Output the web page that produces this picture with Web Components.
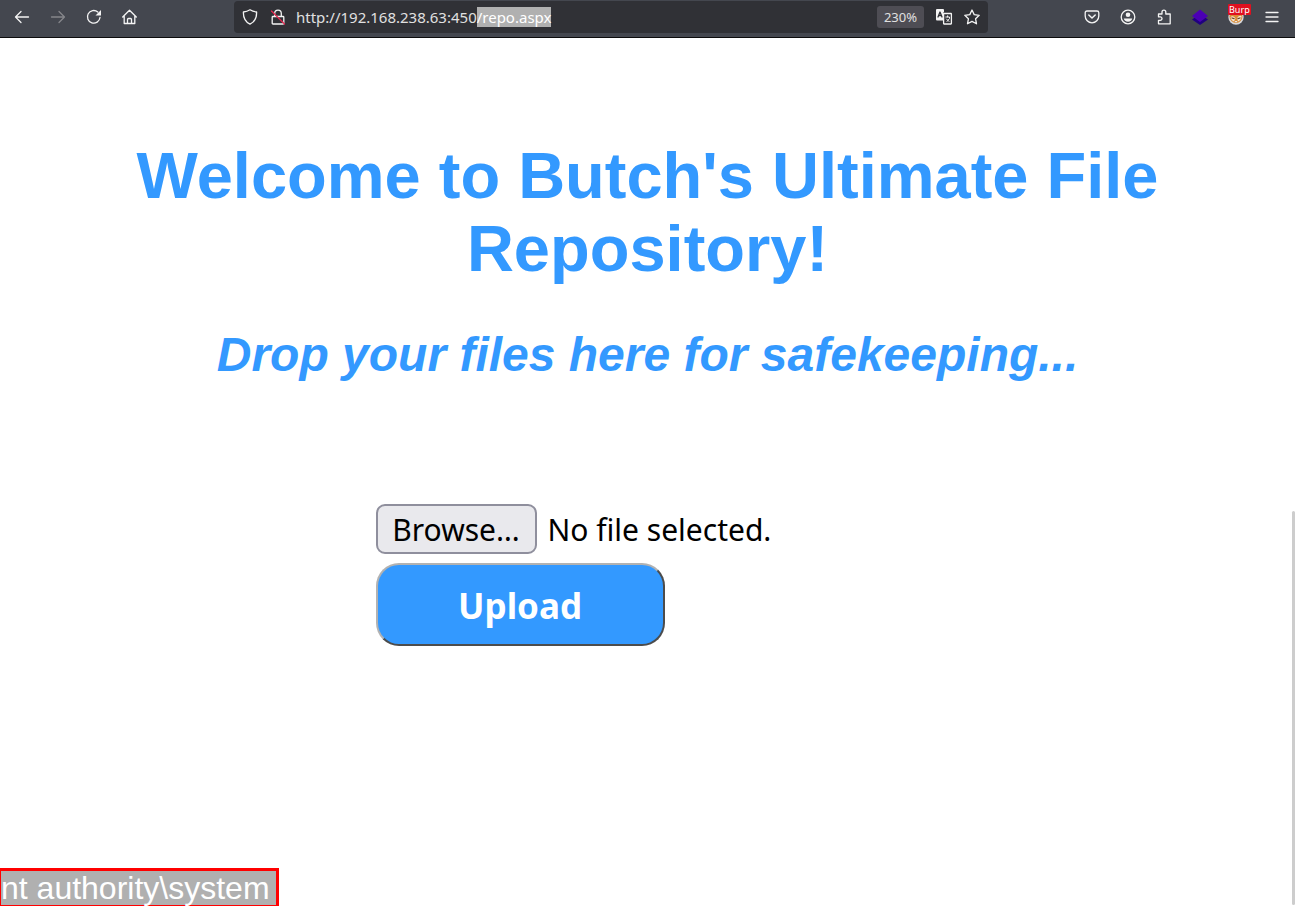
<!DOCTYPE html>
<html lang="en">
<head>
<meta charset="utf-8">
<title>File Repository</title>
<style>
  html, body {
    height: 100%;
    margin: 0;
  }
  body {
    overflow: hidden;
    background: #fff;
  }
</style>
</head>
<body>
<browser-window>
  <browser-toolbar slot="toolbar" address="http://192.168.238.63:450/repo.aspx" zoom="230%"></browser-toolbar>
  <repo-page>
    <span slot="title">Welcome to Butch's Ultimate File Repository!</span>
    <span slot="subtitle">Drop your files here for safekeeping...</span>
    <upload-form></upload-form>
    <command-output slot="output">nt authority\system</command-output>
  </repo-page>
</browser-window>

<script>
  const icons = {
    back: `<path d="M14.500 8H1.500M7 2.500 1.500 8 7 13.500"/>`,
    forward: `<path d="M1.500 8h13M9 2.500 14.500 8 9 13.500"/>`,
    reload: `<path d="M14 8.500A6.300 6.300 0 1 1 11.800 3"/><path d="M15 1v5.500H9.500z" fill="currentColor" stroke="none"/>`,
    home: `<path d="M.7 8 7.500 1.200 14.300 8M2.200 7v7.500h10.600V7M5.500 14.500v-4q0-1 1-1h2q1 0 1 1v4"/>`,
    shield: `<path d="M8 .8c2 1.300 4.300 2 6.600 2.200.2 5.500-1.500 9.800-6.600 12.200C2.900 12.800 1.200 8.500 1.400 3 3.700 2.800 6 2.100 8 .8z"/>`,
    insecure: `<path d="M4.700 7V4.500a3.300 3.300 0 0 1 6.600 0V7M3 7.500h10q.8 0 .8.800v5.900q0 .8-.8.800H3q-.8 0-.8-.8V8.300q0-.8.800-.8z"/><path d="m1.500 2 13 13" stroke="#e22850"/>`,
    translate: `<path d="M1 0h6q1 0 1 1v2.500H7v8H1q-1 0-1-1V1q0-1 1-1z" fill="currentColor" stroke="none"/><path d="M2 8 4 3l2 5M2.700 6.500h2.600" stroke="#303136"/><path d="M8 4.500h7q.4 0 .4.400v9.700q0 .4-.4.400H8q-.4 0-.4-.4V4.900q0-.4.4-.4z"/><path d="M9.800 8h3.700v1.500l-2.500 3M11.600 6.800V8M10.500 10l2.500 2.500" stroke-width="1"/>`,
    star: `<path d="m8 1 2.200 4.600 5 .7-3.600 3.500.9 5L8 12.400l-4.500 2.400.9-5L.8 6.300l5-.7z"/>`,
    pocket: `<path d="M3 2h10q1.800 0 1.800 1.800V7A6.800 6.800 0 0 1 1.200 7V3.800Q1.200 2 3 2z"/><path d="m4.800 6 3.200 3 3.200-3" stroke-width="1.500"/>`,
    account: `<circle cx="8" cy="8" r="6.800"/><circle cx="8" cy="5.800" r="2.300" fill="currentColor" stroke="none"/><path d="M3.800 9.500h8.400c-.2 2-2 3.200-4.200 3.200s-4-1.200-4.200-3.200z" fill="currentColor" stroke="none"/>`,
    extension: `<path d="M2.500 5H6V3a1.900 1.900 0 0 1 3.800 0v2h4.400v9.800H2.500v-3.500h1.800a1.700 1.700 0 0 0 0-3.400H2.500z"/>`,
    layers: `<g stroke="none"><path d="M0 10.500 8 5l8 5.500L8 16z" fill="#200080"/><path d="M0 7 8 .5 16 7 8 13z" fill="#4b00b5"/></g>`,
    fox: `<g stroke="none"><circle cx="8" cy="8" r="7.700" fill="#d9d9dc"/><circle cx="8" cy="7.500" r="6.500" fill="#d98b35"/><path d="M2.500 8q2.500-2 5 1.200L6 12.500q-3-1-3.500-4.500zM9 9.200Q11 6 13.500 7q0 4-3.500 5.500z" fill="#f7e6cf"/><path d="m4 9 2 .7M10 9.700l2-.7" stroke="#6d4220"/><path d="M6.500 12h3L8 13.800z" fill="#eceff1"/></g>`,
    menu: `<path d="M2 3.500h12M2 8h12M2 12.500h12"/>`
  }

  class ToolIcon extends HTMLElement {
    connectedCallback() {
      this.attachShadow({ mode: "open" }).innerHTML = `
      <style>
      :host {
        display: block;
        width: 16px;
        height: 16px;
      }
      svg {
        display: block;
        width: 100%;
        height: 100%;
        overflow: visible;
      }
      </style>
      <svg viewBox="0 0 16 16" fill="none" stroke="currentColor" stroke-width="1.300" stroke-linecap="round" stroke-linejoin="round" aria-hidden="true">${icons[this.getAttribute("name")]}</svg>`
    }
  }

  class ToolButton extends HTMLElement {
    connectedCallback() {
      const label = this.getAttribute("label")
      const disabled = this.hasAttribute("disabled") ? "disabled" : ""
      this.attachShadow({ mode: "open" }).innerHTML = `
      <style>
      :host {
        display: block;
        flex: none;
        width: 36px;
        height: 32px;
      }
      :host([compact]) {
        width: 28px;
      }
      button {
        position: relative;
        display: grid;
        place-items: center;
        width: 100%;
        height: 100%;
        padding: 0;
        border: 0;
        background: none;
        color: #f4f4f4;
      }
      button:disabled {
        color: #85868b;
      }
      ::slotted(.badge) {
        position: absolute;
        top: 3px;
        left: 10px;
        padding: 0 1px;
        border-radius: 1px;
        background: #e0101f;
        color: #fff;
        font: 9px/11px "Noto Sans", sans-serif;
        white-space: nowrap;
      }
      </style>
      <button type="button" aria-label="${label}" ${disabled}>
        <tool-icon name="${this.getAttribute("icon")}"></tool-icon>
        <slot></slot>
      </button>`
    }
  }

  class AddressBar extends HTMLElement {
    connectedCallback() {
      this.attachShadow({ mode: "open" }).innerHTML = `
      <style>
      :host {
        display: flex;
        align-items: center;
        box-sizing: border-box;
        height: 32px;
        padding: 0 2px;
        border-radius: 4px;
        background: #303136;
        color: #e0e0e0;
      }
      input {
        flex: 1;
        min-width: 0;
        margin: 0 0 0 4px;
        padding: 0;
        border: 0;
        outline: 0;
        background: none;
        color: inherit;
        font: 15px/20px "Noto Sans", sans-serif;
      }
      input::selection {
        background: #b0b0b0;
        color: #fff;
      }
      .zoom {
        margin-right: 6px;
        padding: 0 7px;
        border: 0;
        border-radius: 3px;
        background: #4e4d54;
        color: #e0e0e0;
        font: 13px/22px "Noto Sans", sans-serif;
      }
      </style>
      <tool-button compact icon="shield" label="Tracking protection"></tool-button>
      <tool-button compact icon="insecure" label="Connection not secure"></tool-button>
      <input type="text" aria-label="Address" spellcheck="false" value="${this.getAttribute("address")}">
      <button class="zoom" type="button">${this.getAttribute("zoom")}</button>
      <tool-button compact icon="translate" label="Translate page"></tool-button>
      <tool-button compact icon="star" label="Bookmark page"></tool-button>`
      this.selectPath()
    }
    // Leaves the host part alone, so that a new path can be typed at once.
    selectPath() {
      const input = this.shadowRoot.querySelector("input")
      input.focus()
      input.setSelectionRange(input.value.lastIndexOf("/"), input.value.length)
    }
  }

  class BrowserToolbar extends HTMLElement {
    connectedCallback() {
      this.attachShadow({ mode: "open" }).innerHTML = `
      <style>
      :host {
        display: flex;
        justify-content: space-between;
        padding: 1px 5px 4px 4px;
        border-bottom: 1px solid #0c0c0d;
        background: #44474f;
      }
      nav {
        display: flex;
        flex: none;
      }
      address-bar {
        flex: 1;
        min-width: 0;
        margin: 0 86px;
      }
      </style>
      <nav aria-label="Navigation">
        <tool-button icon="back" label="Back"></tool-button>
        <tool-button icon="forward" label="Forward" disabled></tool-button>
        <tool-button icon="reload" label="Reload"></tool-button>
        <tool-button icon="home" label="Home"></tool-button>
      </nav>
      <address-bar address="${this.getAttribute("address")}" zoom="${this.getAttribute("zoom")}"></address-bar>
      <nav aria-label="Tools">
        <tool-button icon="pocket" label="Save to Pocket"></tool-button>
        <tool-button icon="account" label="Account"></tool-button>
        <tool-button icon="extension" label="Extensions"></tool-button>
        <tool-button icon="layers" label="Wappalyzer"></tool-button>
        <tool-button icon="fox" label="FoxyProxy"><span class="badge">Burp</span></tool-button>
        <tool-button icon="menu" label="Menu"></tool-button>
      </nav>`
    }
  }

  class UploadForm extends HTMLElement {
    connectedCallback() {
      this.attachShadow({ mode: "open" }).innerHTML = `
      <style>
      :host {
        display: block;
        width: 42%;
        margin: 0 auto;
        font-family: "Noto Sans", sans-serif;
      }
      form {
        display: flex;
        flex-direction: column;
        align-items: flex-start;
        gap: 9px;
      }
      label {
        position: relative;
        display: flex;
        align-items: center;
        gap: 11px;
        color: #000;
        font-size: 30px;
        line-height: 44px;
        white-space: nowrap;
      }
      input {
        position: absolute;
        inset: 0;
        width: 100%;
        opacity: 0;
      }
      .browse {
        box-sizing: border-box;
        min-width: 161px;
        padding: 2px 12px 0;
        border: 2px solid #8f8f9d;
        border-radius: 9px;
        background: #e9e9ed;
        text-align: center;
      }
      .name {
        padding-top: 2px;
      }
      button {
        width: 289px;
        height: 83px;
        padding: 2px 0 0;
        border: 2px solid;
        border-color: #b2b2b2 #4c4c4c #4c4c4c #b2b2b2;
        border-radius: 23px;
        background: #3399ff;
        color: #fff;
        font: bold 35px/48px "Noto Sans", sans-serif;
      }
      </style>
      <form>
        <label for="file">
          <span class="browse">Browse…</span>
          <span class="name">No file selected.</span>
          <input id="file" type="file">
        </label>
        <button type="submit">Upload</button>
      </form>`
      const root = this.shadowRoot
      root.querySelector("input").addEventListener("change", event => {
        const [file] = event.target.files
        root.querySelector(".name").textContent = file ? file.name : "No file selected."
      })
      root.querySelector("form").addEventListener("submit", event => event.preventDefault())
    }
  }

  class CommandOutput extends HTMLElement {
    connectedCallback() {
      this.attachShadow({ mode: "open" }).innerHTML = `
      <style>
      :host {
        display: block;
        width: fit-content;
        padding: 1px 6px 0 0;
        border: solid #ff0000;
        border-width: 3px 3px 1px 1px;
        background: #b0b0b0;
        color: #fff;
        font-size: 32px;
        line-height: 33px;
      }
      </style>
      <slot></slot>`
    }
  }

  class RepoPage extends HTMLElement {
    connectedCallback() {
      this.attachShadow({ mode: "open" }).innerHTML = `
      <style>
      :host {
        position: relative;
        display: flex;
        flex-direction: column;
        font-family: "Liberation Sans", Arial, sans-serif;
      }
      main {
        flex: 1;
        padding-top: 101px;
      }
      h1, h2 {
        margin: 0;
        padding: 0 16px;
        color: #3399ff;
        text-align: center;
      }
      h1 {
        font-size: 65px;
        line-height: 73px;
      }
      h2 {
        margin: 42px 0 122px;
        font-size: 48px;
        font-style: italic;
        line-height: 55px;
      }
      .scrollbar {
        position: absolute;
        right: 0;
        bottom: 1px;
        width: 3px;
        height: 394px;
        border-radius: 2px;
        background: #cdcdcd;
      }
      </style>
      <main>
        <h1><slot name="title"></slot></h1>
        <h2><slot name="subtitle"></slot></h2>
        <slot></slot>
      </main>
      <slot name="output"></slot>
      <div class="scrollbar"></div>`
    }
  }

  class BrowserWindow extends HTMLElement {
    connectedCallback() {
      this.attachShadow({ mode: "open" }).innerHTML = `
      <style>
      :host {
        display: flex;
        flex-direction: column;
        min-height: 100%;
      }
      ::slotted(repo-page) {
        flex: 1;
      }
      </style>
      <slot name="toolbar"></slot>
      <slot></slot>`
    }
  }

  customElements.define("tool-icon", ToolIcon)
  customElements.define("tool-button", ToolButton)
  customElements.define("address-bar", AddressBar)
  customElements.define("browser-toolbar", BrowserToolbar)
  customElements.define("upload-form", UploadForm)
  customElements.define("command-output", CommandOutput)
  customElements.define("repo-page", RepoPage)
  customElements.define("browser-window", BrowserWindow)
</script>
</body>
</html>
